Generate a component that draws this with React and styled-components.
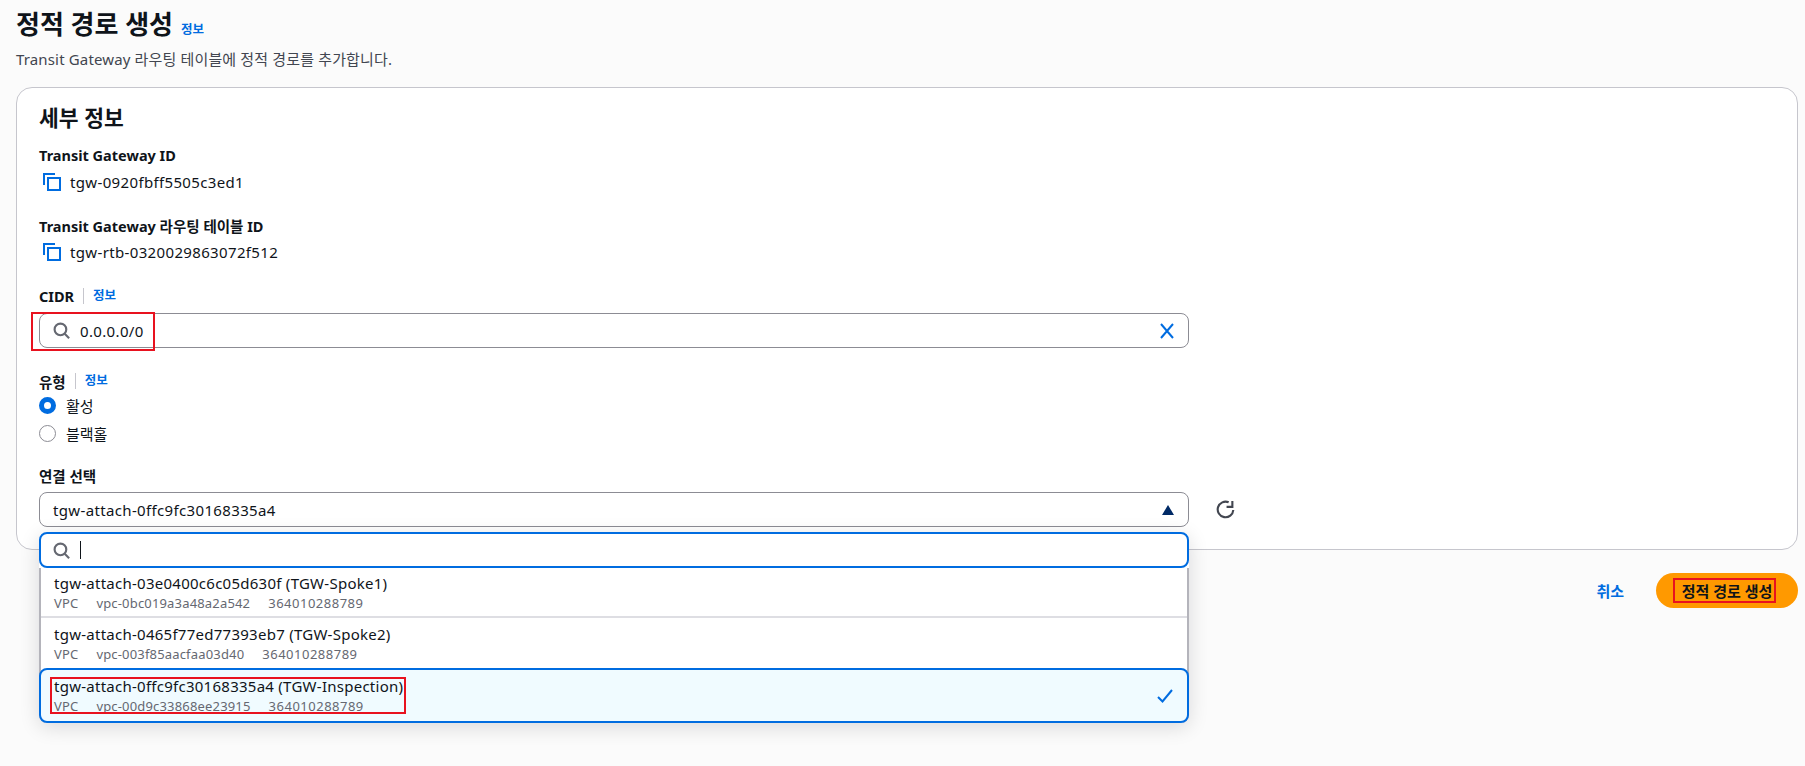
import styled, { createGlobalStyle } from "styled-components";

const GlobalStyle = createGlobalStyle`
  html, body {
    margin: 0;
    background: #fbfbfb;
    font-family: "Noto Sans", "Noto Sans CJK KR", sans-serif;
    color: #0f141a;
  }
  * { box-sizing: border-box; }
`;

const Page = styled.div`
  height: 766px;
  padding: 0 7px 0 16px;
  overflow: hidden;
`;

const TitleRow = styled.div`
  display: flex;
  align-items: baseline;
  gap: 8px;
  height: 46px;
  padding-top: 8px;
`;

const Title = styled.h1`
  margin: 0;
  font-size: 26px;
  line-height: 32px;
  font-weight: 700;
`;

const InfoLink = styled.a`
  color: #006ce0;
  font-size: 12.5px;
  line-height: 16px;
  font-weight: 700;
`;

const Subtitle = styled.p`
  margin: 3px 0 0;
  font-size: 15px;
  line-height: 20px;
  letter-spacing: 0.15px;
  color: #424650;
`;

const Card = styled.section`
  margin-top: 18px;
  height: 463px;
  padding: 16px 22px 0;
  background: #fff;
  border: 1px solid #c6c6cd;
  border-radius: 16px;
`;

const CardTitle = styled.h2`
  margin: 0 0 13px;
  font-size: 21.5px;
  line-height: 28px;
  font-weight: 700;
`;

const Field = styled.div`
  margin-bottom: ${(p) => p.$gap || 0}px;
`;

const LabelRow = styled.div`
  display: flex;
  align-items: center;
  height: 20px;
  font-size: 14.5px;
  font-weight: 700;
`;

const LabelInfo = styled(InfoLink)`
  margin-left: 9px;
  padding-left: 9px;
  border-left: 1px solid #c6c6cd;
`;

const BodyText = styled.span`
  font-size: 15px;
  letter-spacing: 0.35px;
`;

const CopyRow = styled.div`
  display: flex;
  align-items: center;
  gap: 9px;
  height: 24px;
  margin-top: 5px;
  padding-left: 4px;
`;

const InputBox = styled.div`
  position: relative;
  display: flex;
  align-items: center;
  width: 1150px;
  height: 35px;
  margin-top: 7px;
  padding: 0 13px;
  border: 1px solid #8c8c94;
  border-radius: 8px;
  background: #fff;
`;

const SearchText = styled(BodyText)`
  margin-left: 10px;
  flex: 1;
`;

const Annotation = styled.div`
  position: absolute;
  border: 2px solid #e8121f;
  pointer-events: none;
  left: ${(p) => p.$left}px;
  top: ${(p) => p.$top}px;
  width: ${(p) => p.$width}px;
  height: ${(p) => p.$height}px;
`;

const RadioRow = styled.div`
  display: flex;
  align-items: center;
  gap: 10px;
  height: 28px;
  font-size: 15px;
  color: #0f141a;
  &:first-of-type {
    margin-top: 2px;
  }
`;

const RadioDot = styled.span`
  width: 17px;
  height: 17px;
  border-radius: 50%;
  background: #fff;
  border: ${(p) => (p.$checked ? "5px solid #006ce0" : "1px solid #8c8c94")};
`;

const SelectRow = styled.div`
  display: flex;
  align-items: center;
  gap: 27px;
  margin-top: 7px;
`;

const SelectWrap = styled.div`
  position: relative;
  width: 1150px;
`;

const SelectBox = styled.div`
  display: flex;
  align-items: center;
  justify-content: space-between;
  height: 35px;
  padding: 0 14px 0 13px;
  border: 1px solid #8c8c94;
  border-radius: 8px;
  background: #fff;
`;

const Dropdown = styled.div`
  position: absolute;
  top: 40px;
  left: 0;
  right: 0;
  background: #fff;
  border-radius: 8px;
  box-shadow: 0 4px 20px rgba(0, 7, 22, 0.14);
`;

const DropdownSearch = styled.div`
  display: flex;
  align-items: center;
  height: 36px;
  padding: 0 12px;
  background: #fff;
  border: 2px solid #006ce0;
  border-radius: 8px;
`;

const Caret = styled.span`
  width: 1px;
  height: 18px;
  margin-left: 10px;
  background: #0f141a;
`;

const OptionList = styled.div`
  border-left: 2px solid #b4b4bb;
  border-right: 2px solid #b4b4bb;
  border-radius: 0 0 8px 8px;
`;

const Option = styled.div`
  position: relative;
  display: flex;
  align-items: center;
  justify-content: space-between;
  height: ${(p) => (p.$selected ? 55 : 50)}px;
  margin: ${(p) => (p.$selected ? "0 -2px" : "0")};
  padding: 0 13px;
  background: ${(p) => (p.$selected ? "#f0fbff" : "#fff")};
  border: ${(p) => (p.$selected ? "2px solid #006ce0" : "none")};
  border-bottom: ${(p) => (p.$selected ? "2px solid #006ce0" : p.$last ? "none" : "2px solid #dedee3")};
  border-radius: ${(p) => (p.$selected ? "8px" : "0")};
`;

const OptionTitle = styled.div`
  font-size: 15px;
  letter-spacing: 0.26px;
  line-height: 19px;
`;

const OptionMeta = styled.div`
  display: flex;
  font-size: 13px;
  letter-spacing: 0.17px;
  line-height: 16px;
  margin-top: 2px;
  color: #656871;
`;

const MetaItem = styled.span`
  margin-right: ${(p) => p.$gap}px;
`;

const AccountId = styled.span`
  letter-spacing: 0.5px;
`;

const Actions = styled.div`
  display: flex;
  justify-content: flex-end;
  align-items: center;
  gap: 32px;
  margin-top: 23px;
`;

const CancelLink = styled.a`
  color: #006ce0;
  font-size: 15px;
  font-weight: 700;
`;

const PrimaryButton = styled.button`
  position: relative;
  width: 142px;
  height: 35px;
  border: none;
  border-radius: 20px;
  background: #ff9900;
  color: #0f141a;
  font: 700 15px "Noto Sans", "Noto Sans CJK KR", sans-serif;
`;

const SearchIcon = () => (
  <svg width="17" height="17" viewBox="0 0 16 16" fill="none" stroke="#656871" strokeWidth="2">
    <circle cx="7" cy="7" r="5.5" />
    <path d="M11 11l4.2 4.2" />
  </svg>
);

const CopyIcon = () => (
  <svg width="18" height="18" viewBox="0 0 18 18" fill="none" stroke="#006ce0" strokeWidth="2">
    <path d="M1 12V1h11" />
    <rect x="5" y="5" width="12" height="12" />
  </svg>
);

const CloseIcon = () => (
  <svg width="16" height="16" viewBox="0 0 16 16" fill="none" stroke="#006ce0" strokeWidth="2">
    <path d="M2 1l12 14M14 1L2 15" />
  </svg>
);

const RefreshIcon = () => (
  <svg width="19" height="19" viewBox="0 0 18 18" fill="none" stroke="#424650" strokeWidth="2">
    <path d="M12 2.2A7.4 7.4 0 1 0 16.4 9.5" />
    <path d="M15.5 1v5.5H10" />
  </svg>
);

const CheckIcon = () => (
  <svg width="18" height="16" viewBox="0 0 16 16" fill="none" stroke="#006ce0" strokeWidth="2">
    <path d="M1 9l4.5 4.5L15 2" />
  </svg>
);

const options = [
  { title: "tgw-attach-03e0400c6c05d630f (TGW-Spoke1)", vpc: "vpc-0bc019a3a48a2a542" },
  { title: "tgw-attach-0465f77ed77393eb7 (TGW-Spoke2)", vpc: "vpc-003f85aacfaa03d40", last: true },
];

const App = () => {
  return (
    <Page>
      <GlobalStyle />
      <TitleRow>
        <Title>정적 경로 생성</Title>
        <InfoLink>정보</InfoLink>
      </TitleRow>
      <Subtitle>Transit Gateway 라우팅 테이블에 정적 경로를 추가합니다.</Subtitle>
      <Card>
        <CardTitle>세부 정보</CardTitle>
        <Field $gap={21}>
          <LabelRow>Transit Gateway ID</LabelRow>
          <CopyRow>
            <CopyIcon />
            <BodyText>tgw-0920fbff5505c3ed1</BodyText>
          </CopyRow>
        </Field>
        <Field $gap={22}>
          <LabelRow>Transit Gateway 라우팅 테이블 ID</LabelRow>
          <CopyRow>
            <CopyIcon />
            <BodyText>tgw-rtb-0320029863072f512</BodyText>
          </CopyRow>
        </Field>
        <Field $gap={23}>
          <LabelRow>
            CIDR<LabelInfo>정보</LabelInfo>
          </LabelRow>
          <InputBox>
            <SearchIcon />
            <SearchText>0.0.0.0/0</SearchText>
            <CloseIcon />
            <Annotation $left={-9} $top={-2} $width={124} $height={39} />
          </InputBox>
        </Field>
        <Field $gap={18}>
          <LabelRow>
            유형<LabelInfo>정보</LabelInfo>
          </LabelRow>
          <RadioRow>
            <RadioDot $checked />
            활성
          </RadioRow>
          <RadioRow>
            <RadioDot />
            블랙홀
          </RadioRow>
        </Field>
        <Field>
          <LabelRow>연결 선택</LabelRow>
          <SelectRow>
            <SelectWrap>
              <SelectBox>
                <BodyText>tgw-attach-0ffc9fc30168335a4</BodyText>
                <svg width="12" height="10" viewBox="0 0 12 10">
                  <path d="M6 0l6 10H0z" fill="#002a66" />
                </svg>
              </SelectBox>
              <Dropdown>
                <DropdownSearch>
                  <SearchIcon />
                  <Caret />
                </DropdownSearch>
                <OptionList>
                  {options.map((o) => (
                    <Option key={o.title} $last={o.last}>
                      <div>
                        <OptionTitle>{o.title}</OptionTitle>
                        <OptionMeta>
                          <MetaItem $gap={18}>VPC</MetaItem>
                          <MetaItem $gap={18}>{o.vpc}</MetaItem>
                          <AccountId>364010288789</AccountId>
                        </OptionMeta>
                      </div>
                    </Option>
                  ))}
                  <Option $selected>
                    <div>
                      <OptionTitle>tgw-attach-0ffc9fc30168335a4 (TGW-Inspection)</OptionTitle>
                      <OptionMeta>
                        <MetaItem $gap={18}>VPC</MetaItem>
                        <MetaItem $gap={18}>vpc-00d9c33868ee23915</MetaItem>
                        <AccountId>364010288789</AccountId>
                      </OptionMeta>
                    </div>
                    <CheckIcon />
                    <Annotation $left={9} $top={7} $width={356} $height={37} />
                  </Option>
                </OptionList>
              </Dropdown>
            </SelectWrap>
            <RefreshIcon />
          </SelectRow>
        </Field>
      </Card>
      <Actions>
        <CancelLink>취소</CancelLink>
        <PrimaryButton>
          정적 경로 생성
          <Annotation $left={17} $top={5} $width={103} $height={25} />
        </PrimaryButton>
      </Actions>
    </Page>
  );
};

export default App;
